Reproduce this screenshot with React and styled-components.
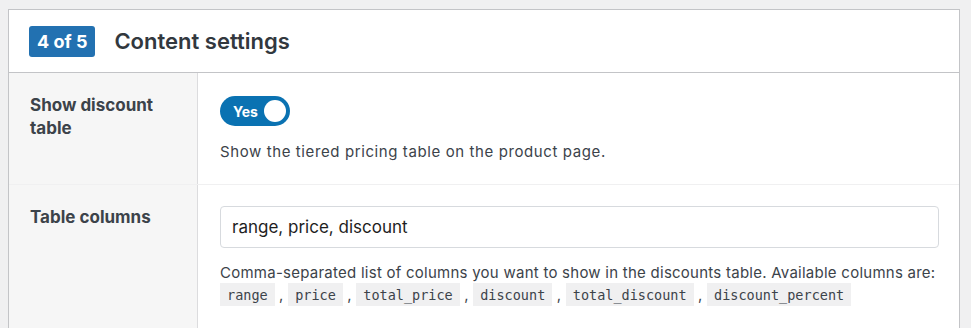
import React from "react";
import styled, { createGlobalStyle } from "styled-components";

const Global = createGlobalStyle`
  html, body { margin: 0; padding: 0; background: #f0f0f1; }
  body {
    font-family: "Inter", "Liberation Sans", sans-serif;
    color: #3c434a;
    padding: 9px 11px 0 8px;
  }
`;

const Card = styled.section`
  background: #fff;
  border: 1px solid #c3c4c7;
  border-bottom: none;
`;

const Header = styled.header`
  display: flex;
  align-items: center;
  gap: 19px;
  height: 62px;
  padding: 0 20px;
  border-bottom: 1px solid #c3c4c7;
`;

const Badge = styled.span`
  display: inline-flex;
  align-items: center;
  justify-content: center;
  height: 31px;
  padding: 0 8px;
  background: #2271b1;
  color: #fff;
  border-radius: 3px;
  font-size: 18px;
  font-weight: 700;
`;

const Title = styled.h2`
  margin: 0;
  font-size: 22px;
  font-weight: 600;
  color: #32383e;
`;

const Row = styled.div`
  display: grid;
  grid-template-columns: 189px 1fr;
  border-bottom: ${(p) => (p.$last ? "none" : "1px solid #f0f0f1")};
`;

const Label = styled.div`
  background: #f6f6f6;
  border-right: 1px solid #dcdcde;
  padding: 21px 20px 20px 21px;
  font-size: 17px;
  font-weight: 700;
  line-height: 23px;
  color: #3c434a;
`;

const Field = styled.div`
  padding: ${(p) => p.$pad};
`;

const Toggle = styled.button`
  display: flex;
  align-items: center;
  justify-content: space-between;
  width: 70px;
  height: 30px;
  padding: 0 4px 0 13px;
  border: none;
  border-radius: 15px;
  background: #0a72b2;
  color: #fff;
  font-family: inherit;
  font-size: 14px;
  font-weight: 700;
  cursor: pointer;
`;

const Knob = styled.span`
  width: 22px;
  height: 22px;
  border-radius: 50%;
  background: #fff;
`;

const Desc = styled.p`
  margin: ${(p) => p.$mt} 0 0;
  font-size: 15px;
  letter-spacing: ${(p) => p.$ls || "0.25px"};
  line-height: 22px;
  color: #3c434a;
`;

const Input = styled.input`
  display: block;
  box-sizing: border-box;
  width: 719px;
  height: 42px;
  padding: 0 11px;
  border: 1px solid #d7dade;
  border-radius: 4px;
  font-family: inherit;
  font-size: 17px;
  color: #1e1e1e;
  background: #fff;
`;

const Code = styled.code`
  background: #f0f0f1;
  padding: 4px 7px 3px;
  font-family: "DejaVu Sans Mono", monospace;
  font-size: 13.5px;
  letter-spacing: 0;
  color: #3c434a;
`;

const cols = ["range", "price", "total_price", "discount", "total_discount", "discount_percent"];

export default function App() {
  return (
    <>
      <Global />
      <Card>
        <Header>
          <Badge>4 of 5</Badge>
          <Title>Content settings</Title>
        </Header>
        <Row>
          <Label>Show discount table</Label>
          <Field $pad="23px 20px 21px 22px">
            <Toggle type="button">
              Yes
              <Knob />
            </Toggle>
            <Desc $mt="15px" $ls="0.6px">Show the tiered pricing table on the product page.</Desc>
          </Field>
        </Row>
        <Row $last>
          <Label>Table columns</Label>
          <Field $pad="21px 20px 40px 22px">
            <Input defaultValue="range, price, discount" />
            <Desc $mt="14px">
              Comma-separated list of columns you want to show in the discounts table. Available columns are:
              <br />
              {cols.map((c, i) => (
                <React.Fragment key={c}>
                  <Code>{c}</Code>
                  {i < cols.length - 1 ? " , " : ""}
                </React.Fragment>
              ))}
            </Desc>
          </Field>
        </Row>
      </Card>
    </>
  );
}
